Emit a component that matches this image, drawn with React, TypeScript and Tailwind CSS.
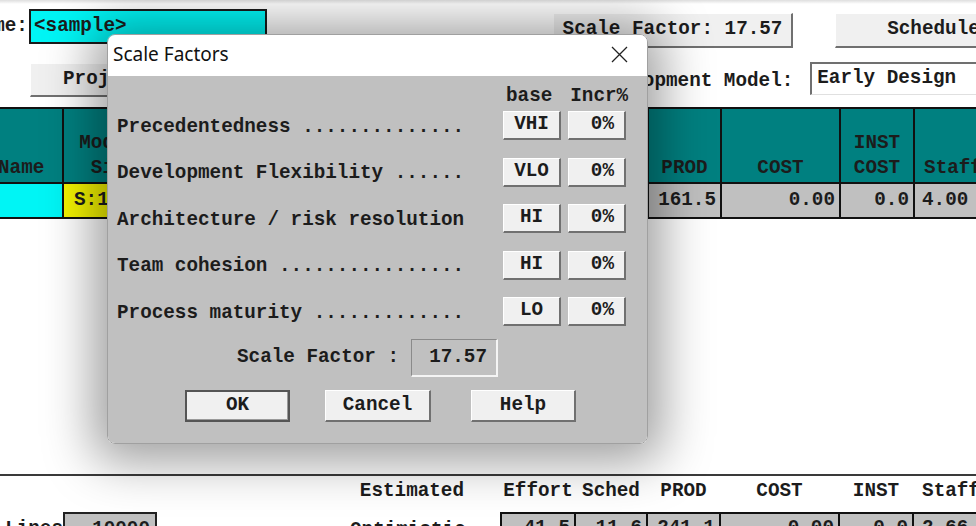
import React from "react";

const mono = "font-['Liberation_Mono','Courier_New',monospace] font-bold text-[19.3px] text-[#1c1c1c]";

const raised =
  "bg-[#f0f0f0] border-t border-l border-t-white border-l-white border-b-2 border-r-2 border-b-[#707070] border-r-[#707070]";

const rows: [string, string][] = [
  ["Precedentedness ..............", "VHI"],
  ["Development Flexibility ......", "VLO"],
  ["Architecture / risk resolution", "HI"],
  ["Team cohesion ................", "HI"],
  ["Process maturity .............", "LO"],
];

function Dialog() {
  return (
    <div className="absolute left-[107px] top-[34px] w-[541px] h-[410px] rounded-lg border border-[#a0a0a0] shadow-[0_4px_50px_14px_rgba(0,0,0,0.38)] overflow-hidden">
      <div className="h-[41px] bg-white flex items-center justify-between pl-[5px] pr-[19px]">
        <span className="font-['Noto_Sans','Open_Sans',sans-serif] font-normal text-[19px] text-[#111] leading-none -mt-[3px]">
          Scale Factors
        </span>
        <svg width="17" height="17" viewBox="0 0 17 17" className="-mt-[3px]">
          <path d="M1 1 L16 16 M16 1 L1 16" stroke="#222" strokeWidth="1.3" fill="none" />
        </svg>
      </div>
      <div className={`bg-[#c0c0c0] h-[369px] pt-[11px] ${mono}`}>
        <div className="flex h-[20px] items-center leading-none *:shrink-0">
          <span className="ml-[398px]">base</span>
          <span className="ml-[18px]">Incr%</span>
        </div>
        <div className="mt-[4px] flex flex-col gap-[17.5px]">
          {rows.map(([label, base]) => (
            <div key={label} className="flex h-[29px] items-center *:shrink-0">
              <span className="w-[395px] pl-[9px] whitespace-pre leading-none pt-[4px]">{label}</span>
              <div className={`w-[58px] h-[29px] flex items-center justify-center leading-none ${raised}`}>
                {base}
              </div>
              <div className={`ml-[7px] w-[58px] h-[29px] flex items-center justify-end pr-[10px] leading-none ${raised}`}>
                0%
              </div>
            </div>
          ))}
        </div>
        <div className="mt-[13px] flex h-[38px] items-center *:shrink-0">
          <span className="ml-[129px] w-[174px] whitespace-pre leading-none">Scale Factor :</span>
          <div className="w-[87px] h-[38px] border-t border-l border-t-[#8a8a8a] border-l-[#8a8a8a] border-b-2 border-r-2 border-b-[#f4f4f4] border-r-[#f4f4f4] flex items-center justify-end pr-[9px] leading-none">
            17.57
          </div>
        </div>
        <div className="mt-[13px] flex h-[32px] items-center *:shrink-0">
          <div className="ml-[77px] w-[105px] h-[32px] border-2 border-[#555] bg-[#f0f0f0] shadow-[inset_-1px_-1px_0_#9a9a9a] flex items-center justify-center leading-none">
            OK
          </div>
          <div className={`ml-[35px] w-[106px] h-[32px] flex items-center justify-center leading-none ${raised}`}>
            Cancel
          </div>
          <div className={`ml-[40px] w-[105px] h-[32px] flex items-center justify-center leading-none ${raised}`}>
            Help
          </div>
        </div>
      </div>
    </div>
  );
}

function HeadCell({ w, lines }: { w: string; lines: string[] }) {
  return (
    <div className={`${w} bg-[#008080] flex flex-col justify-end items-center leading-[25px] pb-[1px] overflow-hidden`}>
      {lines.map((l) => (
        <span key={l} className="whitespace-pre">{l}</span>
      ))}
    </div>
  );
}

export default function App() {
  return (
    <div className={`relative w-[976px] h-[526px] overflow-hidden bg-white ${mono}`}>
      <div className="h-[4px] bg-gradient-to-b from-[#dedede] to-white" />
      {/* Row 1 */}
      <div className="flex h-[48px] items-start *:shrink-0">
        <div className="mt-[5px] flex items-center *:shrink-0">
          <span className="-ml-[30px] w-[58px] leading-none">Name:</span>
          <div className="ml-[1px] w-[238px] h-[35px] bg-[#00f5f5] border-2 border-[#1a1a1a] flex items-center pl-[3px] leading-none">
            &lt;sample&gt;
          </div>
        </div>
        <div className={`ml-[286px] mt-[9px] w-[240px] h-[35px] flex items-center justify-center leading-none ${raised}`}>
          Scale Factor: 17.57
        </div>
        <div className={`ml-[42px] mt-[9px] w-[198px] h-[35px] flex items-center justify-center leading-none ${raised}`}>
          Schedule
        </div>
      </div>
      {/* Row 2 */}
      <div className="flex h-[55px] items-start *:shrink-0">
        <div className={`ml-[30px] mt-[11px] w-[170px] h-[34px] flex items-center pl-[32px] leading-none ${raised}`}>
          Project
        </div>
        <span className="ml-[385px] mt-[20px] leading-none whitespace-pre">Development Model:</span>
        <div className="ml-[17px] mt-[10px] w-[200px] h-[33px] bg-white border-t-2 border-l-2 border-t-[#707070] border-l-[#707070] border-b border-r border-b-[#e0e0e0] border-r-[#e0e0e0] flex items-center pl-[5px] leading-none">
          Early Design
        </div>
      </div>
      {/* Table */}
      <div className="bg-[#111] py-[2px] flex flex-col gap-[2px]">
        <div className="flex gap-[2px] h-[73px] *:shrink-0">
          <div className="w-[62px] bg-[#008080] flex items-end leading-[25px] pb-[1px]">
            <span className="-ml-[2px]">Name</span>
          </div>
          <HeadCell w="w-[100px]" lines={["Module", "Size"]} />
          <HeadCell w="w-[481px]" lines={["EAF"]} />
          <HeadCell w="w-[71px]" lines={["PROD"]} />
          <HeadCell w="w-[117px]" lines={["COST"]} />
          <HeadCell w="w-[72px]" lines={["INST", "COST"]} />
          <HeadCell w="w-[76px]" lines={["Staff"]} />
        </div>
        <div className="flex gap-[2px] h-[33px] leading-none *:shrink-0">
          <div className="w-[62px] bg-[#00f5f5]" />
          <div className="w-[100px] bg-[#f5f500] flex items-center pl-[10px]">S:10000</div>
          <div className="w-[481px] bg-[#c0c0c0]" />
          <div className="w-[71px] bg-[#c0c0c0] flex items-center justify-end pr-[4px]">161.5</div>
          <div className="w-[117px] bg-[#c0c0c0] flex items-center justify-end pr-[4px]">0.00</div>
          <div className="w-[72px] bg-[#c0c0c0] flex items-center justify-end pr-[4px]">0.0</div>
          <div className="w-[76px] bg-[#c0c0c0] flex items-center pl-[7px]">4.00</div>
        </div>
      </div>
      <div className="h-[255px]" />
      <div className="h-[2px] bg-[#3a3a3a]" />
      {/* Bottom section */}
      <div className="flex h-[36px] items-start pt-[4px] leading-[22px] *:shrink-0">
        <span className="w-[464px] text-right">Estimated</span>
        <span className="w-[37px]" />
        <span className="w-[74px] text-center">Effort</span>
        <span className="w-[72px] text-center">Sched</span>
        <span className="w-[73px] text-center">PROD</span>
        <span className="w-[119px] text-center">COST</span>
        <span className="w-[74px] text-center">INST</span>
        <span className="w-[76px] text-center">Staff</span>
      </div>
      <div className="flex h-[40px] items-start *:shrink-0">
        <span className="w-[63px] text-right pt-[8px] leading-none">Lines</span>
        <div className="w-[94px] h-[34px] border-2 border-[#222] bg-[#c0c0c0] flex items-start justify-end pr-[5px] pt-[6px] leading-none">
          10000
        </div>
        <span className="ml-[193px] w-[150px] pt-[9px] leading-none">Optimistic</span>
        <div className="flex bg-[#111] gap-[2px] p-[2px] h-[34px] leading-none *:shrink-0">
          <div className="w-[72px] bg-[#c0c0c0] text-right pr-[4px] pt-[5px]">41.5</div>
          <div className="w-[70px] bg-[#c0c0c0] text-right pr-[4px] pt-[5px]">11.6</div>
          <div className="w-[71px] bg-[#c0c0c0] text-right pr-[4px] pt-[5px]">241.1</div>
          <div className="w-[117px] bg-[#c0c0c0] text-right pr-[4px] pt-[5px]">0.00</div>
          <div className="w-[72px] bg-[#c0c0c0] text-right pr-[4px] pt-[5px]">0.0</div>
          <div className="w-[70px] bg-[#c0c0c0] pl-[8px] pt-[5px]">2.66</div>
        </div>
      </div>
      <Dialog />
    </div>
  );
}
